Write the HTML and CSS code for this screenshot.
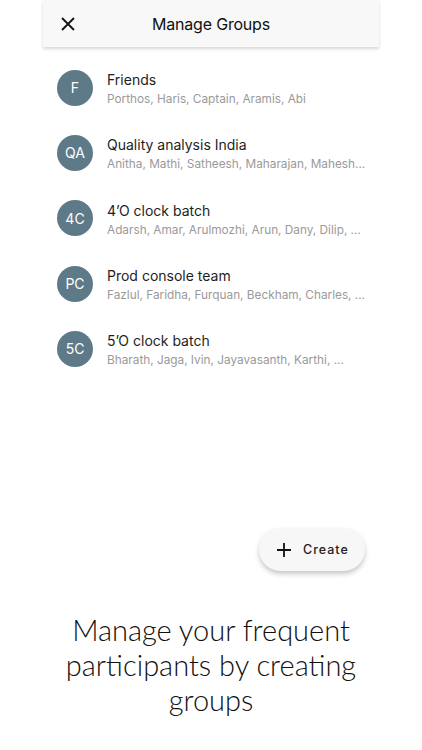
FILE: index.html
```html
<!DOCTYPE html>
<html lang="en">
  <head>
    <meta charset="UTF-8" />
    <meta name="viewport" content="width=device-width, initial-scale=1.0" />
    <title>Manage Groups</title>
    <link rel="stylesheet" href="styles.css">
  </head>

  <body>
    <div class="screen">
      <div class="header">
        <span class="close">
          <svg width="14" height="14" viewBox="0 0 14 14">
            <path d="M1 1 L13 13 M13 1 L1 13" stroke="#111" stroke-width="1.8" fill="none" />
          </svg>
        </span>
        <h1>Manage Groups</h1>
      </div>

      <ul class="groups">
        <li>
          <div class="avatar">F</div>
          <div class="info">
            <p class="name">Friends</p>
            <p class="members">Porthos, Haris, Captain, Aramis, Abi</p>
          </div>
        </li>
        <li>
          <div class="avatar">QA</div>
          <div class="info">
            <p class="name">Quality analysis India</p>
            <p class="members">Anitha, Mathi, Satheesh, Maharajan, Mahesh...</p>
          </div>
        </li>
        <li>
          <div class="avatar">4C</div>
          <div class="info">
            <p class="name">4’O clock batch</p>
            <p class="members">Adarsh, Amar, Arulmozhi, Arun, Dany, Dilip, ...</p>
          </div>
        </li>
        <li>
          <div class="avatar">PC</div>
          <div class="info">
            <p class="name">Prod console team</p>
            <p class="members">Fazlul, Faridha, Furquan, Beckham, Charles, ...</p>
          </div>
        </li>
        <li>
          <div class="avatar">5C</div>
          <div class="info">
            <p class="name">5’O clock batch</p>
            <p class="members">Bharath, Jaga, Ivin, Jayavasanth, Karthi, ...</p>
          </div>
        </li>
      </ul>

      <div class="fab-row">
        <button class="fab">
          <svg width="14" height="14" viewBox="0 0 14 14">
            <path d="M7 0 V14 M0 7 H14" stroke="#111" stroke-width="1.8" fill="none" />
          </svg>
          <span>Create</span>
        </button>
      </div>
    </div>

    <p class="caption">Manage your frequent participants by creating groups</p>
  </body>
</html>
```

FILE: styles.css
```css
* {
  margin: 0;
  padding: 0;
  box-sizing: border-box;
}

body {
  background: #fff;
  font-family: "Inter", "Liberation Sans", sans-serif;
  color: #222;
}

.screen {
  display: flex;
  flex-direction: column;
  width: 336px;
  height: 592px;
  margin: 0 auto;
}

.header {
  position: relative;
  display: flex;
  align-items: center;
  justify-content: center;
  height: 47px;
  background: #f8f8f8;
  box-shadow: 0 2px 3px rgba(0, 0, 0, 0.16);
}

.header .close {
  position: absolute;
  left: 18px;
  top: 15px;
  width: 14px;
  height: 14px;
}

.header h1 {
  font-size: 16px;
  font-weight: 400;
  color: #111;
  letter-spacing: -0.2px;
}

.groups {
  flex: 1;
  list-style: none;
  padding-top: 8px;
}

.groups li {
  display: flex;
  align-items: center;
  height: 65.3px;
  padding-left: 14px;
}

.avatar {
  display: flex;
  align-items: center;
  justify-content: center;
  flex: none;
  width: 36px;
  height: 36px;
  border-radius: 50%;
  background: #5e7a89;
  color: #fff;
  font-size: 14px;
}

.info {
  margin-left: 14px;
  padding-top: 2px;
}

.name {
  font-size: 14px;
  color: #1e1e1e;
  line-height: 19px;
}

.members {
  margin-top: 2px;
  font-size: 11.8px;
  color: #9a9a9a;
  line-height: 16px;
}

.fab-row {
  display: flex;
  justify-content: flex-end;
  padding-right: 14px;
  padding-bottom: 21px;
}

.fab {
  display: flex;
  align-items: center;
  width: 106px;
  height: 43px;
  padding-left: 18px;
  border: none;
  border-radius: 22px;
  background: #f7f7f7;
  box-shadow: 0 3px 5px rgba(0, 0, 0, 0.22);
  font-family: inherit;
}

.fab span {
  margin-left: 12px;
  font-size: 12.5px;
  font-weight: 500;
  letter-spacing: 1px;
  color: #222;
}

.caption {
  width: 340px;
  margin: 20px auto 0;
  text-align: center;
  font-family: "Lato", "Liberation Sans", sans-serif;
  font-weight: 300;
  font-size: 29px;
  line-height: 35px;
  color: #111;
}
```
